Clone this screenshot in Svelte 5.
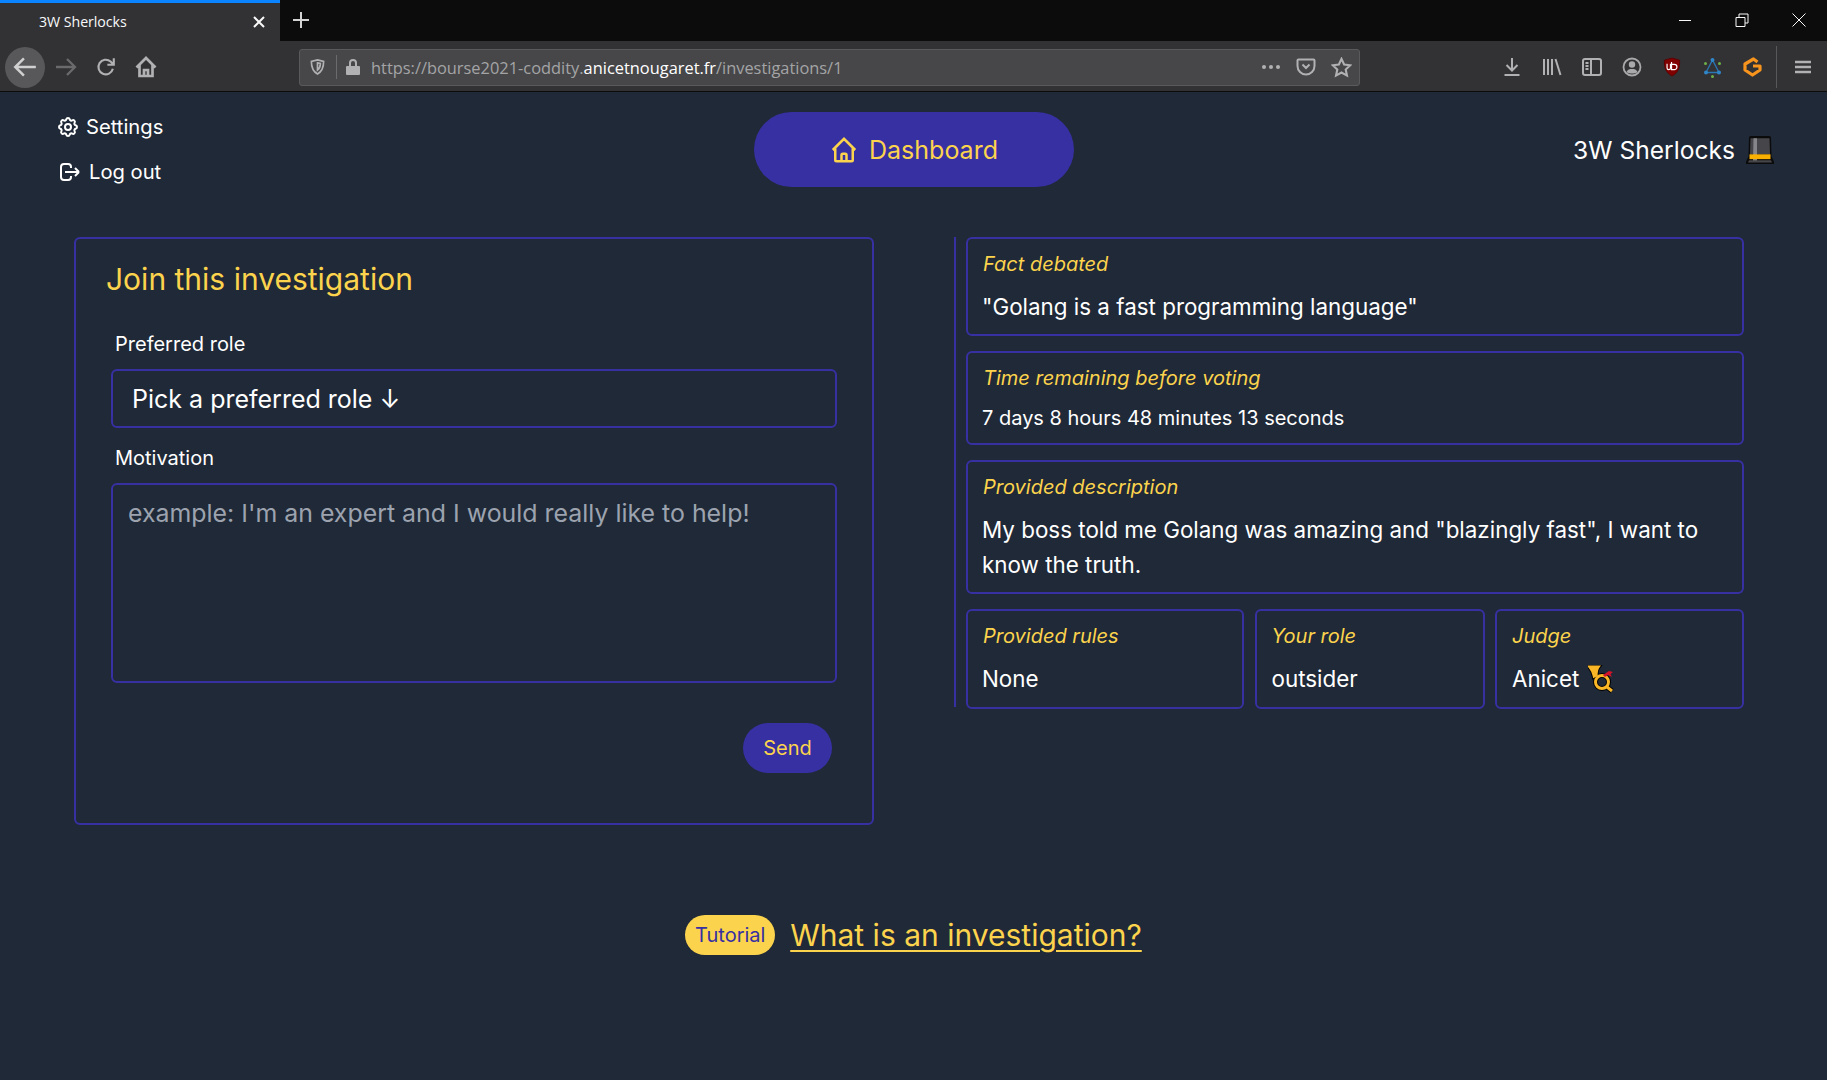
<script>
  const pageUrl = { scheme: 'https://bourse2021-coddity.', host: 'anicetnougaret.fr', path: '/investigations/1' };
</script>

<div class="window">
  <div class="tabbar">
    <div class="tab">
      <span class="tab-title">3W Sherlocks</span>
      <svg class="tab-close" viewBox="0 0 14 14" width="14" height="14"><path d="M2 2l10 10M12 2L2 12" /></svg>
    </div>
    <svg class="new-tab" viewBox="0 0 18 18" width="18" height="18"><path d="M9 1v16M1 9h16" /></svg>
    <div class="win-controls">
      <svg viewBox="0 0 14 14" width="14" height="14"><path d="M1 7.500h12" /></svg>
      <svg viewBox="0 0 14 14" width="14" height="14"><path d="M1 4.500h9v9H1zM4 4.500V1h9v9h-3" /></svg>
      <svg viewBox="0 0 14 14" width="14" height="14"><path d="M.5.5l13 13M13.500.5l-13 13" /></svg>
    </div>
  </div>

  <div class="toolbar">
    <div class="nav-buttons">
      <span class="back">
        <svg viewBox="0 0 24 24" width="26" height="26"><path d="M22 12H3M11 4l-8 8 8 8" /></svg>
      </span>
      <span class="tool dim"><svg viewBox="0 0 24 24" width="24" height="24"><path d="M2 12h19M13 4l8 8-8 8" /></svg></span>
      <span class="tool"><svg viewBox="0 0 24 24" width="22" height="22"><path d="M19.500 14a8 8 0 1 1-2.500-8l3 3M20.500 2.500V9.500h-7" /></svg></span>
      <span class="tool home"><svg viewBox="0 0 24 24" width="24" height="24"><path d="M2.500 12.500L12 3l9.500 9.500M5.500 10v11h13V10M10 21v-6h4v6" /></svg></span>
    </div>

    <div class="urlbar">
      <svg class="u-shield" viewBox="0 0 18 18" width="17" height="18"><path d="M9 1.500l6.500 1.500c0 6-1 10.500-6.500 13.500C3.500 13.500 2.500 9 2.500 3zM9 4.500l3 .7c0 3-.6 5.300-3 7z" /></svg>
      <span class="u-divider"></span>
      <svg class="u-lock" viewBox="0 0 16 18" width="16" height="18"><path d="M2 8h12a1 1 0 0 1 1 1v7a1 1 0 0 1-1 1H2a1 1 0 0 1-1-1V9a1 1 0 0 1 1-1zM4 8V5a4 4 0 0 1 8 0v3h-2V5a2 2 0 0 0-4 0v3z" /></svg>
      <span class="url">{pageUrl.scheme}<b>{pageUrl.host}</b>{pageUrl.path}</span>
      <svg class="u-dots" viewBox="0 0 20 6" width="20" height="6"><circle cx="3" cy="3" r="2" /><circle cx="10" cy="3" r="2" /><circle cx="17" cy="3" r="2" /></svg>
      <svg class="u-line" viewBox="0 0 20 20" width="20" height="20"><path d="M2.500 2.500h15a1 1 0 0 1 1 1V9a8.500 8.500 0 0 1-17 0V3.500a1 1 0 0 1 1-1zM6.500 7.500L10 11l3.500-3.500" /></svg>
      <svg class="u-line" viewBox="0 0 20 20" width="21" height="21"><path d="M10 1.800l2.500 5.400 5.800.7-4.300 4 1.200 5.800-5.200-2.900-5.200 2.900 1.200-5.800-4.300-4 5.800-.7z" /></svg>
    </div>

    <div class="extensions">
      <span class="ext"><svg viewBox="0 0 20 20" width="20" height="20" class="x-line"><path d="M10 1v12M4.500 8l5.500 5.500L15.500 8M2.500 18h15" /></svg></span>
      <span class="ext"><svg viewBox="0 0 20 20" width="20" height="20" class="x-line"><path d="M2 2v16M6 2v16M10 2v16M13.500 2l5 16" /></svg></span>
      <span class="ext"><svg viewBox="0 0 20 20" width="20" height="20" class="x-line"><rect x="1" y="2" width="18" height="16" rx="2" /><path d="M9 2v16M3.500 6H6.500M3.500 9H6.500M3.500 12H6.500" /></svg></span>
      <span class="ext"><svg viewBox="0 0 20 20" width="20" height="20" class="x-ring"><circle cx="10" cy="10" r="8.500" /><circle cx="10" cy="7.500" r="3.200" class="solid" /><path d="M4.500 15c1-2.500 3-3 5.500-3s4.500.5 5.500 3c-1.500 1-3.500 1.500-5.500 1.500s-4-.5-5.500-1.500z" class="solid" /></svg></span>
      <span class="ext"><svg class="ublock" viewBox="0 0 20 22" width="18" height="20"><path d="M10 1l8.500 2.500c0 9-1.500 13.500-8.500 17.500C3 17 1.500 12.500 1.500 3.500z" /><path class="u-o" d="M4.500 7.500v4.500a1.900 1.900 0 0 0 3.800 0V7.500M9.500 5.500v8.500h3a3 3 0 0 0 0-6h-3" /></svg></span>
      <span class="ext"><svg class="tri" viewBox="0 0 19 21" width="19" height="21"><path d="M9.500 3L3 15.500h13z" /><circle class="blue" cx="9.500" cy="3" r="2" /><circle class="blue" cx="3" cy="15.500" r="2" /><circle class="blue" cx="16" cy="15.500" r="2" /><circle class="green" cx="2.500" cy="6.500" r="1.500" /><circle class="green" cx="16.500" cy="6.500" r="1.500" /><circle class="green" cx="9.500" cy="19.500" r="1.500" /></svg></span>
      <span class="ext"><svg class="gram" viewBox="0 0 19 20" width="19" height="20"><path d="M14.500 5L10.500 2 2 7v6l7.500 5 7.500-5V9h-7" /></svg></span>
      <span class="x-divider"></span>
      <svg class="hamburger" viewBox="0 0 16 14" width="16" height="14"><path d="M0 2h16M0 7h16M0 12h16" /></svg>
    </div>
  </div>

  <div class="page">
    <header class="site-header">
      <nav class="side-links">
        <a class="side-link" href="#settings">
          <svg viewBox="0 0 24 24" width="24" height="24"><path d="M10.325 4.317c.426-1.756 2.924-1.756 3.350 0a1.724 1.724 0 002.573 1.066c1.543-.94 3.310.826 2.370 2.370a1.724 1.724 0 001.065 2.572c1.756.426 1.756 2.924 0 3.350a1.724 1.724 0 00-1.066 2.573c.94 1.543-.826 3.310-2.370 2.370a1.724 1.724 0 00-2.572 1.065c-.426 1.756-2.924 1.756-3.350 0a1.724 1.724 0 00-2.573-1.066c-1.543.94-3.310-.826-2.370-2.370a1.724 1.724 0 00-1.065-2.572c-1.756-.426-1.756-2.924 0-3.350a1.724 1.724 0 001.066-2.573c-.94-1.543.826-3.310 2.370-2.370.996.608 2.296.07 2.572-1.065z" /><path d="M15 12a3 3 0 11-6 0 3 3 0 016 0z" /></svg>
          <span>Settings</span>
        </a>
        <a class="side-link logout" href="#logout">
          <svg viewBox="0 0 24 24" width="24" height="24"><path d="M17 16l4-4m0 0l-4-4m4 4H7m6 4v1a3 3 0 01-3 3H6a3 3 0 01-3-3V7a3 3 0 013-3h4a3 3 0 013 3v1" /></svg>
          <span>Log out</span>
        </a>
      </nav>
      <a class="dashboard" href="#dashboard">
        <svg viewBox="0 0 24 24" width="30" height="30"><path d="M3 12l2-2m0 0l7-7 7 7M5 10v10a1 1 0 001 1h3m10-11l2 2m-2-2v10a1 1 0 01-1 1h-3m-6 0a1 1 0 001-1v-4a1 1 0 011-1h2a1 1 0 011 1v4a1 1 0 001 1m-6 0h6" /></svg>
        <span>Dashboard</span>
      </a>
      <div class="brand">
        <span>3W Sherlocks</span>
        <svg class="hat" viewBox="0 0 28 26" width="28" height="28" preserveAspectRatio="none">
          <path d="M3 1.500Q3 0 5 0h18q2 0 2 1.500L25.500 19l2.500 5v2H0v-2l2.500-5z" class="h-edge" />
          <path d="M4.500 2h19L24 17H4z" class="h-body" />
          <path d="M7.500 2h3.500v22H7z" class="h-stripe" />
          <path d="M3.500 17h21v4.500h-21z" class="h-band" />
          <path d="M3 22.500h22l1 2H2z" class="h-body" />
        </svg>
      </div>
    </header>

    <main class="content">
      <section class="join">
        <h2>Join this investigation</h2>
        <label class="field-label" for="role">Preferred role</label>
        <button id="role" class="select" type="button">Pick a preferred role ↓</button>
        <label class="field-label second" for="motivation">Motivation</label>
        <textarea id="motivation" placeholder="example: I'm an expert and I would really like to help!"></textarea>
        <div class="actions"><button class="send" type="button">Send</button></div>
      </section>

      <section class="facts">
        <div class="card c1">
          <em>Fact debated</em>
          <p>"Golang is a fast programming language"</p>
        </div>
        <div class="card c2">
          <em>Time remaining before voting</em>
          <p class="small">7 days 8 hours 48 minutes 13 seconds</p>
        </div>
        <div class="card c3">
          <em>Provided description</em>
          <p>My boss told me Golang was amazing and "blazingly fast", I want to know the truth.</p>
        </div>
        <div class="trio">
          <div class="card"><em>Provided rules</em><p>None</p></div>
          <div class="card"><em>Your role</em><p class="flush">outsider</p></div>
          <div class="card">
            <em>Judge</em>
            <p class="judge flush">Anicet
              <svg class="horn" viewBox="0 0 26 28" width="26" height="28">
                <g class="h-outline">
                  <path d="M2 2h8c-1.500 2-2 5-1.800 8l-2 1C5.500 7.500 4 4.500 2 2z" />
                  <circle cx="14" cy="17" r="6.500" />
                  <path d="M19 22l5 4" />
                </g>
                <g class="h-gold">
                  <path d="M2 2h8c-1.500 2-2 5-1.800 8l-2 1C5.500 7.500 4 4.500 2 2z" class="h-bell" />
                  <circle cx="14" cy="17" r="6.500" />
                  <path d="M19 22l5 4" />
                </g>
                <path class="h-ribbon" d="M15 10l6-4 4 1-2.500 2 1.500 3-4-2-3 2z" />
              </svg>
            </p>
          </div>
        </div>
      </section>
    </main>

    <footer class="tutorial">
      <span class="pill">Tutorial</span>
      <a href="#tutorial">What is an investigation?</a>
    </footer>
  </div>
</div>

<style>
  :global(body) {
    margin: 0;
    background: #1f2937;
  }
  .window {
    min-height: 1080px;
    display: flex;
    flex-direction: column;
    font-family: Inter, "Liberation Sans", sans-serif;
    color: #fff;
    background: #1f2937;
  }
  svg {
    display: block;
    flex: none;
    fill: none;
    stroke: currentColor;
  }

  /* Browser frame */
  .tabbar {
    height: 41px;
    display: flex;
    align-items: stretch;
    background: #0c0c0d;
    color: #f9f9fa;
  }
  .tab {
    width: 280px;
    box-sizing: border-box;
    display: flex;
    align-items: center;
    justify-content: space-between;
    padding: 0 14px 0 39px;
    background: #323234;
    border-top: 3px solid #0a84ff;
    font: 14.200px/1 "Open Sans", sans-serif;
    letter-spacing: -.05px;
  }
  .tab-close { stroke-width: 2; }
  .new-tab {
    align-self: center;
    margin: -2px 0 0 12px;
    stroke: #d5d5d6;
    stroke-width: 2;
  }
  .win-controls {
    margin-left: auto;
    display: flex;
    align-items: center;
    gap: 43px;
    padding: 0 21px 2px 0;
  }
  .win-controls svg { stroke-width: 1; }
  .toolbar {
    height: 51px;
    box-sizing: border-box;
    display: flex;
    align-items: center;
    padding-top: 2px;
    background: #323234;
    border-bottom: 1px solid #0c0c0d;
    color: #b1b1b3;
  }
  .nav-buttons {
    display: flex;
    align-items: center;
    padding-left: 5px;
    width: 294px;
    box-sizing: border-box;
  }
  .back {
    width: 40px;
    height: 41px;
    margin-right: 1px;
    border-radius: 50%;
    background: #58585a;
    display: flex;
    align-items: center;
    justify-content: center;
    color: #d0d0d1;
  }
  .back svg, .tool svg { stroke-width: 2.300; }
  .tool {
    width: 40px;
    display: flex;
    justify-content: center;
  }
  .home svg { stroke-width: 2.700; }
  .dim { color: #6a6a6c; }
  .urlbar {
    width: 1061px;
    height: 37px;
    box-sizing: border-box;
    display: flex;
    align-items: center;
    background: #474749;
    border: 1px solid #5a5a5c;
    border-radius: 3px;
    margin-left: 5px;
  }
  .u-shield { margin-left: 9px; stroke-width: 1.800; }
  .u-divider {
    width: 1px;
    height: 24px;
    background: #6b6b6d;
    margin-left: 10px;
  }
  .u-lock { margin-left: 8px; fill: #b1b1b3; stroke: none; }
  .url {
    margin-left: 10px;
    padding-top: 2px;
    font: 16.400px/1 "Open Sans", sans-serif;
    color: #a4a4a6;
    flex: 1;
    white-space: nowrap;
  }
  .url b { font-weight: 400; color: #fff; }
  .u-dots { fill: #b1b1b3; stroke: none; margin-right: 15px; }
  .u-line { stroke-width: 2; margin-right: 15px; }
  .u-line:last-child { margin-right: 7px; }
  .extensions {
    flex: 1;
    display: flex;
    align-items: center;
    padding-left: 132px;
  }
  .ext {
    width: 40px;
    display: flex;
    justify-content: center;
  }
  .x-line { stroke-width: 2; }
  .x-ring { stroke-width: 1.800; color: #a9a9ab; }
  .solid { fill: currentColor; stroke: none; }
  .ublock path { fill: #800000; stroke: #5c0000; }
  .ublock path.u-o { fill: none; stroke: #fff; stroke-width: 1.300; }
  .tri path { stroke: #2b76b5; stroke-width: 1.300; }
  .tri circle { stroke: none; }
  .tri .blue { fill: #2f86c9; }
  .tri .green { fill: #6fb04a; }
  .gram path {
    stroke: #f7941d;
    stroke-width: 3.200;
    stroke-linejoin: round;
  }
  .x-divider {
    width: 1px;
    height: 42px;
    background: #58585a;
    margin-left: 4px;
  }
  .hamburger {
    stroke-width: 2.500;
    margin-left: 18px;
  }

  /* Page */
  .site-header {
    display: grid;
    grid-template-columns: 1fr 320px 1fr;
    align-items: start;
    padding: 20px 53px 0;
  }
  .side-links {
    display: flex;
    flex-direction: column;
    gap: 15px;
    padding-left: 3px;
    align-items: flex-start;
  }
  .side-link {
    display: flex;
    align-items: center;
    gap: 6px;
    color: #fff;
    text-decoration: none;
    font-size: 20.200px;
    line-height: 30px;
  }
  .side-link svg { stroke-width: 2; }
  .logout { margin-left: 2px; gap: 7px; }
  .dashboard {
    height: 75px;
    border-radius: 38px;
    background: #3730a3;
    color: #fcd34d;
    text-decoration: none;
    font-size: 25px;
    display: flex;
    align-items: center;
    justify-content: center;
    gap: 10px;
  }
  .dashboard svg { stroke-width: 2; }
  .brand {
    justify-self: end;
    display: flex;
    align-items: center;
    gap: 11px;
    height: 75px;
    font-size: 24.600px;
  }
  .hat path { stroke: none; }
  .hat .h-edge { fill: #0b0b0b; }
  .hat .h-body { fill: #46464a; }
  .hat .h-stripe { fill: #85858a; }
  .hat .h-band { fill: #f9b000; }
  .content {
    display: grid;
    grid-template-columns: 800px 790px;
    justify-content: space-between;
    align-items: start;
    margin: 50px 83px 0 74px;
  }
  .join {
    height: 588px;
    box-sizing: border-box;
    border: 2px solid #3730a3;
    border-radius: 6px;
    padding: 20px 35px 0;
  }
  h2 {
    margin: 0 0 0 -5px;
    font-size: 30px;
    line-height: 40px;
    font-weight: 400;
    color: #fcd34d;
  }
  .field-label {
    display: block;
    margin-top: 31px;
    margin-left: 4px;
    font-size: 20px;
    line-height: 28px;
  }
  .field-label.second { margin-top: 16px; }
  .select {
    display: block;
    width: 100%;
    height: 59px;
    margin-top: 11px;
    padding: 0 19px;
    box-sizing: border-box;
    text-align: left;
    background: transparent;
    color: #fff;
    border: 2px solid #3730a3;
    border-radius: 6px;
    font: 400 25px Inter, sans-serif;
  }
  textarea {
    display: block;
    width: 100%;
    height: 200px;
    margin-top: 11px;
    padding: 10px 15px;
    box-sizing: border-box;
    background: transparent;
    color: #fff;
    border: 2px solid #3730a3;
    border-radius: 6px;
    font: 400 24.900px/36px Inter, sans-serif;
    resize: none;
    outline: none;
  }
  textarea::placeholder { color: #9ca3af; opacity: 1; }
  .actions {
    display: flex;
    justify-content: flex-end;
    margin-top: 40px;
    padding-right: 5px;
  }
  .send {
    width: 89px;
    height: 50px;
    border: 0;
    border-radius: 25px;
    background: #3730a3;
    color: #fcd34d;
    font: 400 20px Inter, sans-serif;
  }
  .facts {
    display: flex;
    flex-direction: column;
    gap: 15px;
    border-left: 2px solid #3730a3;
    padding-left: 10px;
    height: 470px;
    box-sizing: border-box;
  }
  .card {
    box-sizing: border-box;
    border: 2px solid #3730a3;
    border-radius: 6px;
    padding: 11px 15px;
  }
  .c1 { height: 99px; }
  .c2 { height: 94px; }
  .c3 { height: 134px; padding-top: 11px; }
  .card em {
    display: block;
    font-size: 20px;
    line-height: 28px;
    color: #fcd34d;
  }
  .card p {
    margin: 0 0 0 -1px;
    padding-top: 11px;
    font-size: 22.400px;
    line-height: 35px;
  }
  .card p.flush { margin-left: 0; }
  .card p.small {
    font-size: 20px;
    line-height: 28px;
    padding-top: 12px;
  }
  .c3 p { padding-top: 11px; }
  .trio {
    display: grid;
    grid-template-columns: 278px 230px 249px;
    gap: 10.500px;
    height: 98px;
  }
  p.judge {
    display: flex;
    align-items: center;
    gap: 9px;
  }
  .horn { fill: none; }
  .h-outline { stroke: #000; stroke-width: 5; }
  .h-gold { stroke: #f9b626; stroke-width: 3; }
  .h-bell { fill: #f9b626; }
  .h-ribbon { fill: #d3132a; stroke: none; }
  .tutorial {
    display: flex;
    align-items: center;
    justify-content: center;
    gap: 15px;
    margin-top: 90px;
  }
  .pill {
    width: 90px;
    height: 40px;
    border-radius: 20px;
    background: #fcd34d;
    color: #3730a3;
    font-size: 20px;
    display: flex;
    align-items: center;
    justify-content: center;
  }
  .tutorial a {
    color: #fcd34d;
    font-size: 30px;
    line-height: 40px;
    text-decoration: underline;
    text-underline-offset: 4px;
    text-decoration-thickness: 2px;
  }
</style>
